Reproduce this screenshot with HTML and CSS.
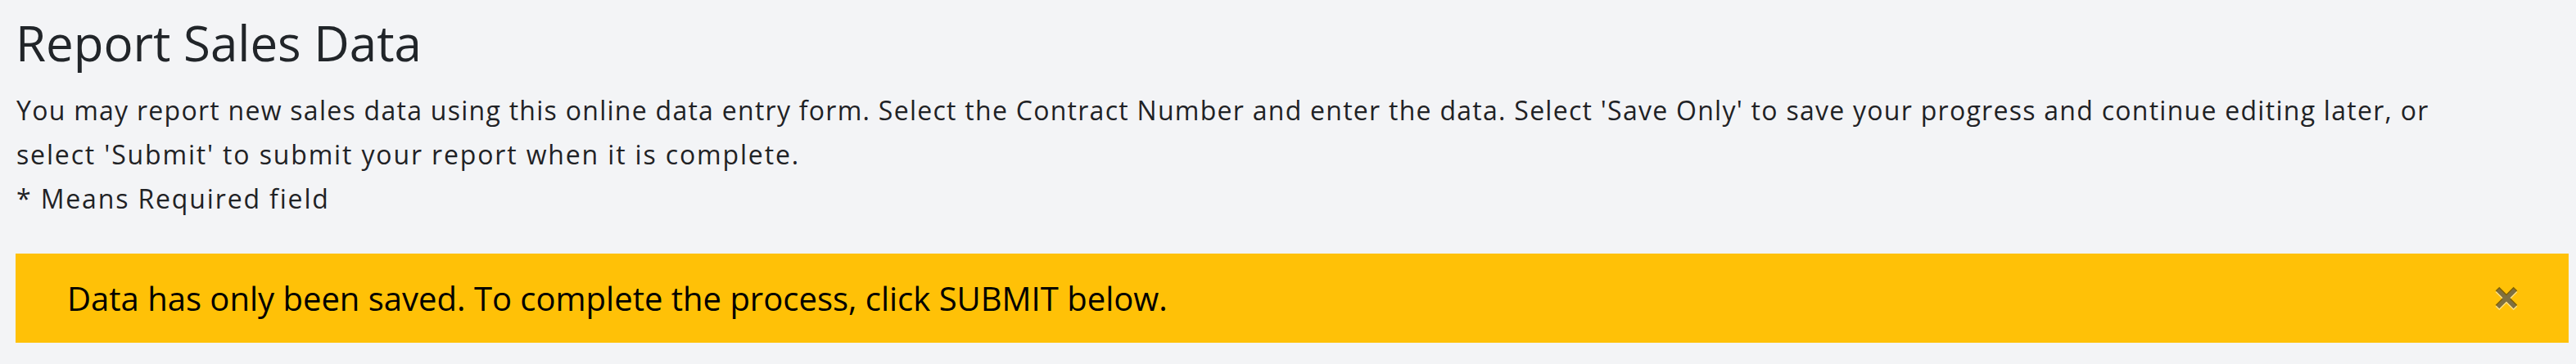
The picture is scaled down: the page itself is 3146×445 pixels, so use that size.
FILE: index.html
```html
<!DOCTYPE html>
<html lang="en">
<head>
<meta charset="utf-8">
<title>Report Sales Data</title>
<link rel="stylesheet" href="styles.css">
</head>
<body>
<main class="page">
  <h1 class="title">Report Sales Data</h1>
  <p class="intro"><span class="line line-first">You may report new sales data using this online data entry form. Select the Contract Number and enter the data. Select 'Save Only' to save your progress and continue editing later, or</span><br><span class="line">select 'Submit' to submit your report when it is complete.</span><br><span class="line">* Means Required field</span></p>
  <div class="alert" role="alert">
    <span class="alert-text">Data has only been saved. To complete the process, click SUBMIT below.</span>
    <button class="close" type="button" aria-label="Close">
      <svg class="close-icon" viewBox="0 0 28 30" width="28" height="30" aria-hidden="true">
        <g stroke-width="6.5" stroke-linecap="butt">
          <path class="shadow" d="M3 5 L25 27 M25 5 L3 27"/>
          <path class="mark" d="M3 3 L25 25 M25 3 L3 25"/>
        </g>
      </svg>
    </button>
  </div>
</main>
</body>
</html>
```

FILE: styles.css
```css
html, body {
  margin: 0;
  padding: 0;
  background: #f3f4f6;
}

body {
  font-family: "Open Sans", "Noto Sans", sans-serif;
  color: #212529;
}

.page {
  padding: 16px 9px 0 20px;
}

.title {
  margin: 0 0 20px -1px;
  font-size: 60px;
  font-weight: 400;
  line-height: 72px;
  color: #212529;
}

.intro {
  margin: 0 0 40px 0;
  font-size: 32px;
  line-height: 54px;
  color: #1f2225;
  white-space: nowrap;
}

.line {
  letter-spacing: 1.85px;
}

.line-first {
  letter-spacing: 1.27px;
}

.alert {
  display: flex;
  align-items: center;
  justify-content: space-between;
  margin-left: -1px;
  padding: 24px 62px 24px 63px;
  background: #ffc107;
}

.alert-text {
  font-size: 40px;
  line-height: 61px;
  color: #000;
}

.close {
  display: flex;
  padding: 0;
  border: 0;
  background: transparent;
  cursor: pointer;
}

.close-icon .mark {
  stroke: #000;
  stroke-opacity: 0.5;
}

.close-icon .shadow {
  stroke: #fff;
  stroke-opacity: 0.5;
}
```
